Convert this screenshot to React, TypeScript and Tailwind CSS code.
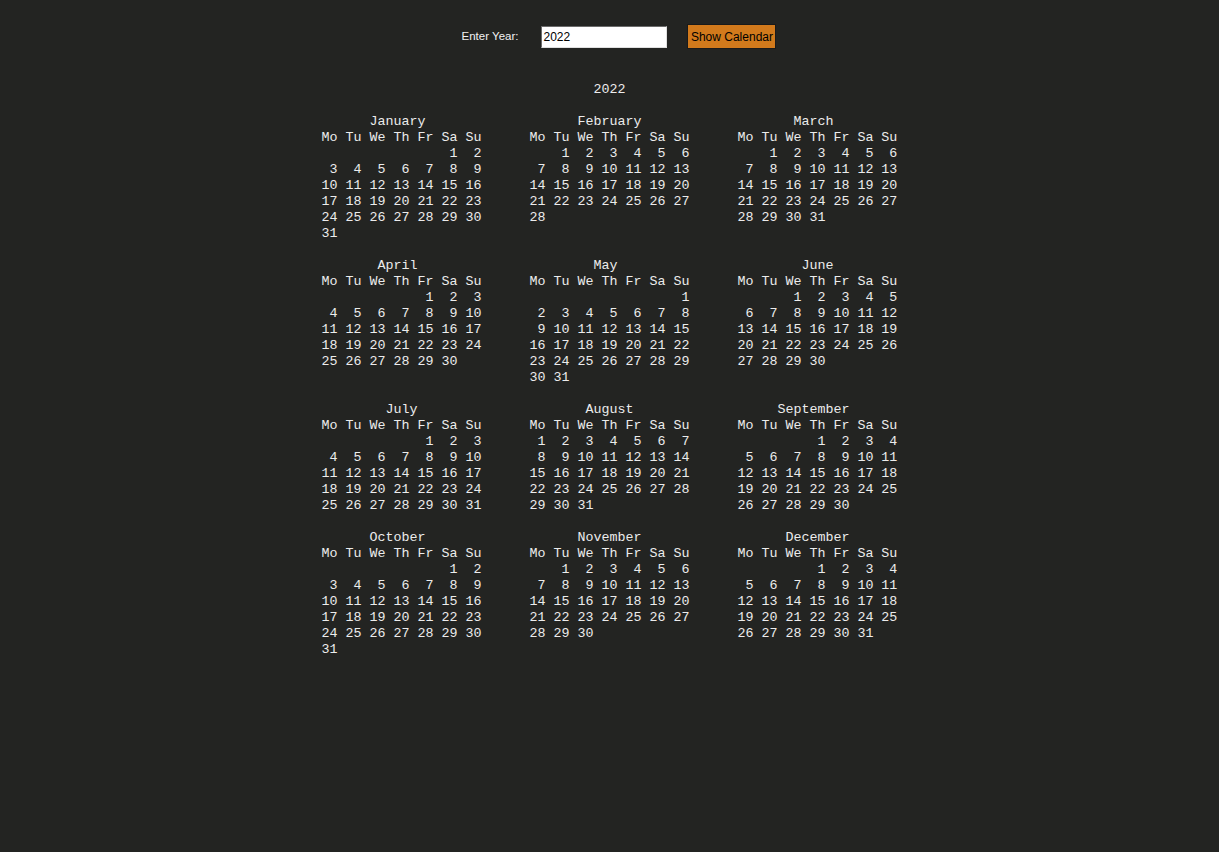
import { useState } from 'react'

const MONTHS = [
  'January', 'February', 'March', 'April', 'May', 'June',
  'July', 'August', 'September', 'October', 'November', 'December',
]

// same layout as python's calendar.TextCalendar().formatyear(year)
function monthWeeks(year: number, month: number): number[][] {
  const first = (new Date(year, month, 1).getDay() + 6) % 7
  const days = new Date(year, month + 1, 0).getDate()
  const cells: number[] = []
  for (let i = 0; i < first; i++) cells.push(0)
  for (let d = 1; d <= days; d++) cells.push(d)
  while (cells.length % 7) cells.push(0)
  const weeks: number[][] = []
  for (let i = 0; i < cells.length; i += 7) weeks.push(cells.slice(i, i + 7))
  return weeks
}

const center = (s: string, w: number) => {
  const total = w - s.length
  if (total <= 0) return s
  const left = Math.floor(total / 2) + (total % 2 && w % 2 ? 1 : 0)
  return ' '.repeat(left) + s + ' '.repeat(total - left)
}

function formatYear(year: number) {
  const colwidth = 20
  const gap = 6
  const out: string[] = []
  out.push(center(String(year), colwidth * 3 + gap * 2).trimEnd())
  out.push('')
  const header = 'Mo Tu We Th Fr Sa Su'
  const join = (parts: string[]) =>
    parts.map((p) => center(p, colwidth)).join(' '.repeat(gap)).trimEnd()
  for (let r = 0; r < 4; r++) {
    const ms = [r * 3, r * 3 + 1, r * 3 + 2]
    out.push(join(ms.map((m) => MONTHS[m])))
    out.push(join(ms.map(() => header)))
    const cals = ms.map((m) => monthWeeks(year, m))
    const height = Math.max(...cals.map((c) => c.length))
    for (let j = 0; j < height; j++) {
      out.push(
        join(
          cals.map((c) =>
            j < c.length
              ? c[j].map((d) => (d ? String(d).padStart(2, ' ') : '  ')).join(' ')
              : ''
          )
        )
      )
    }
    out.push('')
  }
  return out.join('\n')
}

export default function App() {
  const [year, setYear] = useState('2022')
  const [shown, setShown] = useState(2022)

  return (
    <div className="min-h-screen w-full bg-[#232422] text-[#ececec]">
      {/* input row */}
      <div className="flex items-center justify-center pl-[19px] pt-[24px] font-['Liberation_Sans',sans-serif] text-[12px]">
        <span className="mr-[23px] text-[11.5px] text-[#f2f2f2]">Enter Year:</span>
        <input
          value={year}
          onChange={(e) => setYear(e.target.value)}
          className="h-[22px] w-[126px] border border-t-[#6b6b6b] border-l-[#6b6b6b] border-b-[#e0e0e0] border-r-[#e0e0e0] bg-white px-[1px] text-[12px] text-black outline-none"
        />
        <button
          onClick={() => setShown(parseInt(year) || shown)}
          className="ml-[20px] h-[25px] w-[89px] border border-[#1a1a1a] bg-[#d27a1c] text-[12px] text-black"
        >
          Show Calendar
        </button>
      </div>

      {/* calendar */}
      <div className="mt-[33px] flex justify-center">
        <pre className="w-[576px] whitespace-pre font-['Liberation_Mono','Courier_New',monospace] text-[13.333px] leading-[16px]">
          {formatYear(shown)}
        </pre>
      </div>
    </div>
  )
}
